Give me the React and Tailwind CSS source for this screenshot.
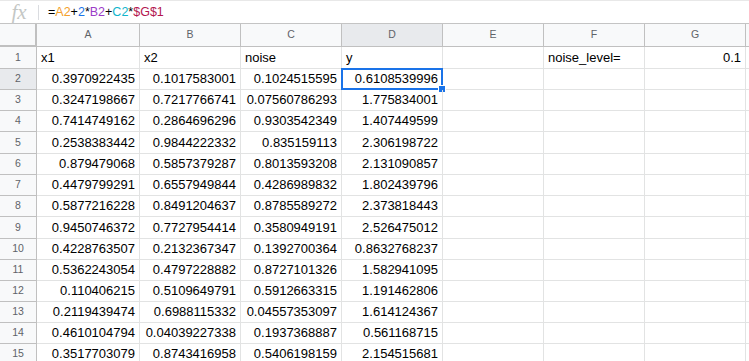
import React from "react";

const rows = [
  ["0.3970922435", "0.1017583001", "0.1024515595", "0.6108539996"],
  ["0.3247198667", "0.7217766741", "0.07560786293", "1.775834001"],
  ["0.7414749162", "0.2864696296", "0.9303542349", "1.407449599"],
  ["0.2538383442", "0.9844222332", "0.835159113", "2.306198722"],
  ["0.879479068", "0.5857379287", "0.8013593208", "2.131090857"],
  ["0.4479799291", "0.6557949844", "0.4286989832", "1.802439796"],
  ["0.5877216228", "0.8491204637", "0.8785589272", "2.373818443"],
  ["0.9450746372", "0.7727954414", "0.3580949191", "2.526475012"],
  ["0.4228763507", "0.2132367347", "0.1392700364", "0.8632768237"],
  ["0.5362243054", "0.4797228882", "0.8727101326", "1.582941095"],
  ["0.110406215", "0.5109649791", "0.5912663315", "1.191462806"],
  ["0.2119439474", "0.6988115332", "0.04557353097", "1.614124367"],
  ["0.4610104794", "0.04039227338", "0.1937368887", "0.561168715"],
  ["0.3517703079", "0.8743416958", "0.5406198159", "2.154515681"],
];

const tall = new Set([5, 9]);
const cols = ["A", "B", "C", "D", "E", "F", "G", ""];

export default function App() {
  return (
    <div className="w-[749px] h-[361px] overflow-hidden bg-white" style={{ fontFamily: '"Liberation Sans", Arial, sans-serif' }}>
      {/* formula bar */}
      <div className="h-[24px] flex items-center border-t border-t-[#e8e8e8] border-b border-b-[#c4c4c4]">
        <div className="w-[38px] h-[22px] flex items-center justify-center">
          <span className="text-[21px] italic text-[#c4c7c5] leading-[22px]" style={{ fontFamily: '"Liberation Serif", serif' }}>fx</span>
        </div>
        <div className="w-px h-[15px] bg-[#dadce0]" />
        <div className="pl-[9px] text-[12.5px] leading-none text-black">
          <span>=</span>
          <span className="text-[#f4a02c]">A2</span>
          <span>+</span>
          <span className="text-[#1a73e8]">2</span>
          <span>*</span>
          <span className="text-[#9c3cc8]">B2</span>
          <span>+</span>
          <span className="text-[#12b5cb]">C2</span>
          <span>*</span>
          <span className="text-[#b3174f]">$G$1</span>
        </div>
      </div>
      {/* grid */}
      <div className="grid grid-cols-[37px_103px_101px_101px_101px_101px_101px_101px_101px]">
        {/* header row */}
        <div className="h-[23px] bg-[#f8f9fa] border-r-2 border-b-2 border-[#c0c0c0]" />
        {cols.map((c, i) => (
          <div
            key={c + i}
            className={`h-[23px] flex items-center justify-center text-[10.5px] text-[#5f6368] border-r border-b border-[#c0c0c0] ${c === "D" ? "bg-[#e8eaed]" : "bg-[#f8f9fa]"}`}
          >
            {c}
          </div>
        ))}
        {/* row 1 */}
        <div className="h-[22px] flex items-center justify-center text-[10.5px] text-[#5f6368] bg-[#f8f9fa] border-r border-b border-[#c0c0c0]">1</div>
        {["x1", "x2", "noise", "y", "", "noise_level="].map((t, i) => (
          <div key={i} className="h-[22px] flex items-center px-[4px] text-[13px] text-black border-r border-b border-[#e2e3e3]">{t}</div>
        ))}
        <div className="h-[22px] flex items-center justify-end px-[4px] text-[13px] text-black border-r border-b border-[#e2e3e3]">0.1</div>
        <div className="h-[22px] border-r border-b border-[#e2e3e3]" />
        {rows.map((r, ri) => {
          const n = ri + 2;
          const h = tall.has(n) ? "h-[22px]" : "h-[21px]";
          return (
            <React.Fragment key={n}>
              <div className={`${h} flex items-center justify-center text-[10.5px] text-[#5f6368] border-r border-b border-[#c0c0c0] ${n === 2 ? "bg-[#e8eaed]" : "bg-[#f8f9fa]"}`}>{n}</div>
              {r.map((v, ci) => (
                <div key={ci} className={`${h} relative flex items-center justify-end px-[4px] text-[13px] text-black border-r border-b border-[#e2e3e3]`}>
                  {v}
                  {n === 2 && ci === 3 && (
                    <>
                      <div className="absolute -left-[1px] -top-[1px] -right-[1px] -bottom-[1px] border-2 border-[#1a73e8] pointer-events-none" />
                      <div className="absolute -right-[4px] -bottom-[4px] w-[6px] h-[6px] bg-[#1a73e8] border border-white box-content" />
                    </>
                  )}
                </div>
              ))}
              <div className={`${h} border-r border-b border-[#e2e3e3]`} />
              <div className={`${h} border-r border-b border-[#e2e3e3]`} />
              <div className={`${h} border-r border-b border-[#e2e3e3]`} />
              <div className={`${h} border-r border-b border-[#e2e3e3]`} />
            </React.Fragment>
          );
        })}
      </div>
    </div>
  );
}
